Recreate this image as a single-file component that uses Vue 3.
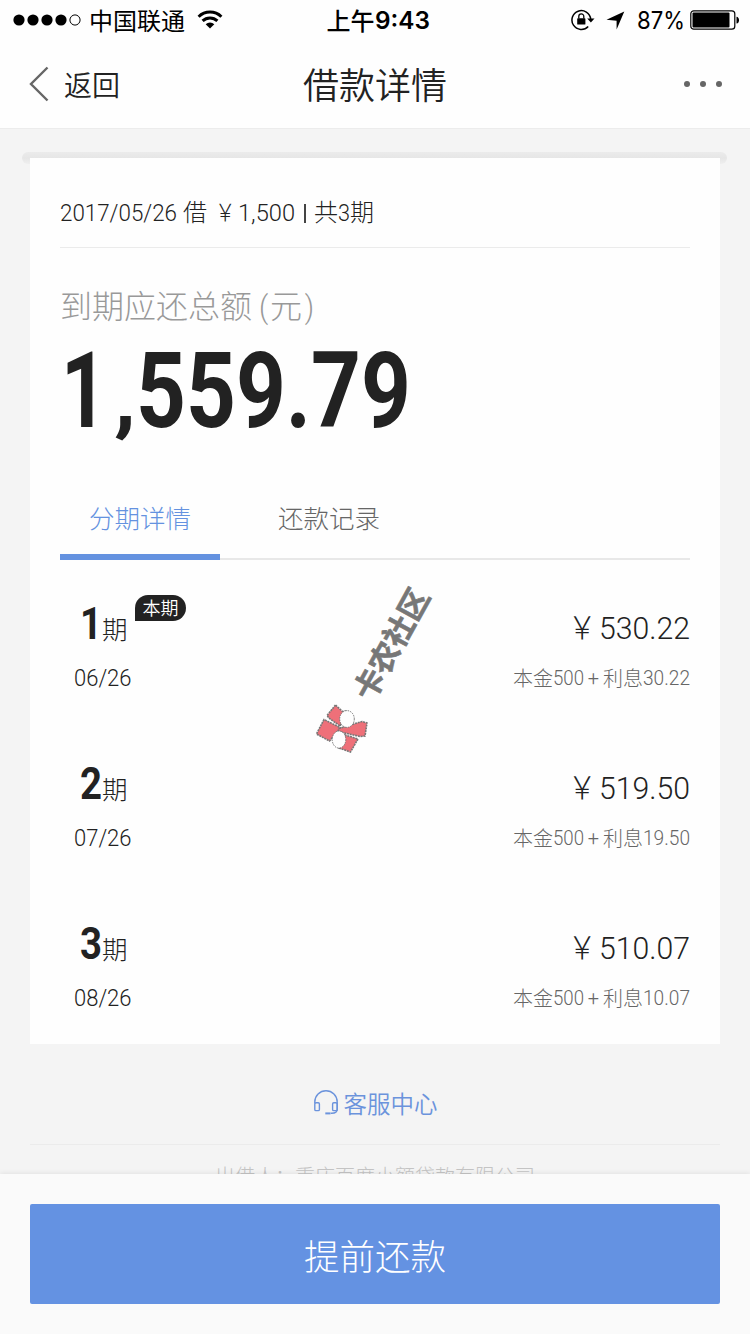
<script setup>
const installments = [
  { no: 1, date: '06/26', amount: '530.22', interest: '30.22', current: true },
  { no: 2, date: '07/26', amount: '519.50', interest: '19.50', current: false },
  { no: 3, date: '08/26', amount: '510.07', interest: '10.07', current: false },
]

// Condenses a run of text horizontally so that it takes the given width
const vFit = {
  mounted(el, { value }) {
    const natural = el.getBoundingClientRect().width
    el.style.transform = `scaleX(${value / natural})`
    el.style.marginRight = `${value - natural}px`
  },
}
</script>

<template>
  <div class="page">
    <header class="top">
      <div class="status">
        <div class="status-left">
          <svg class="signal" width="68" height="12" viewBox="0 0 68 12">
            <circle cx="6" cy="6" r="5.6" /><circle cx="20" cy="6" r="5.6" />
            <circle cx="34" cy="6" r="5.6" /><circle cx="48" cy="6" r="5.6" />
            <circle cx="62" cy="6" r="5.1" fill="none" stroke="#000" stroke-width="1" />
          </svg>
          <span class="carrier">中国联通</span>
          <svg class="wifi" width="26" height="20" viewBox="0 0 26 20">
            <path d="M1.6 6.7a16.3 16.3 0 0 1 22.8 0M5.6 10.9a10.6 10.6 0 0 1 14.8 0" fill="none" stroke="#000" stroke-width="3" />
            <path d="M13 18.6l-4.3-4.3a6.1 6.1 0 0 1 8.6 0z" />
          </svg>
        </div>
        <div class="clock"><span class="ampm">上午</span><span v-fit="55" class="fit inter">9:43</span></div>
        <div class="status-right">
          <svg width="24" height="22" viewBox="0 0 24 22">
            <path d="M17.2 17.5A9.4 9.4 0 1 1 19.7 10" fill="none" stroke="#000" stroke-width="1.5" />
            <path d="M16.2 9.5h7.3l-3.6 4z" />
            <rect x="6.2" y="9.3" width="8.2" height="6.2" rx=".6" />
            <path d="M7.8 9.5V7.4a2.5 2.5 0 0 1 5 0v2.1" fill="none" stroke="#000" stroke-width="1.3" />
          </svg>
          <svg class="arrow" width="19" height="19" viewBox="0 0 19 19"><path d="M18.3.5L10.6 18.5V9.7L.5 8.7z" /></svg>
          <span v-fit="48" class="fit pct">87%</span>
          <svg class="battery" width="50" height="20" viewBox="0 0 50 20">
            <rect x=".8" y=".8" width="44" height="18.4" rx="3" fill="none" stroke="#000" stroke-width="1.2" />
            <rect x="2.5" y="2.6" width="37" height="14.8" rx="1" />
            <path d="M46.5 6.7c3.4.3 3.4 6.5 0 6.8z" />
          </svg>
        </div>
      </div>
      <nav class="nav">
        <div class="back">
          <svg width="22" height="36" viewBox="0 0 22 36"><path d="M19.5 1.5L3 18l16.5 16.5" fill="none" stroke="#666" stroke-width="2.4" /></svg>
          <span>返回</span>
        </div>
        <h1>借款详情</h1>
        <div class="more"><i></i><i></i><i></i></div>
      </nav>
    </header>

    <main>
      <div class="slot"></div>
      <section class="card">
        <div class="summary">
          <span v-fit="117" class="fit">2017/05/26</span>
          <span class="gap-l">借</span>
          <span v-fit="23" class="fit yen">￥</span>
          <span v-fit="57" class="fit">1,500</span>
          <span class="bar"></span>
          <span>共</span><span v-fit="12" class="fit">3</span><span>期</span>
        </div>
        <div class="label">到期应还总额<span v-fit="11" class="fit open">(</span>元<span v-fit="12" class="fit close">)</span></div>
        <div class="total"><span v-fit="46" class="fit">1</span><span v-fit="22" class="fit comma">,</span><span v-fit="275" class="fit">559.79</span></div>

        <div class="tabs">
          <div class="tab active">分期详情</div>
          <div class="tab">还款记录</div>
        </div>

        <ul class="list">
          <li v-for="item in installments" :key="item.no">
            <div class="line main-line">
              <div class="period">
                <span v-fit="22" class="fit no">{{ item.no }}</span><span class="unit">期</span>
                <span v-if="item.current" class="badge">本期</span>
              </div>
              <div class="amount"><span v-fit="31" class="fit amount-yen">￥</span><span v-fit="91" class="fit">{{ item.amount }}</span></div>
            </div>
            <div class="line sub-line">
              <div class="date"><span v-fit="57.5" class="fit">{{ item.date }}</span></div>
              <div class="detail">
                <span class="word">本金</span><span v-fit="31" class="fit">500</span>
                <span class="plus">+</span>
                <span class="word">利息</span><span v-fit="47" class="fit">{{ item.interest }}</span>
              </div>
            </div>
          </li>
        </ul>
      </section>

      <div class="service">
        <svg width="26" height="26" viewBox="0 0 26 26" fill="none" stroke="#6b93dc" stroke-width="1.4">
          <path d="M1.8 13.5V12a11.2 11.2 0 0 1 22.4 0v7.2c0 2.8-2.6 4-5.5 4h-1" />
          <rect x="1.8" y="12.8" width="4.6" height="7.8" rx="1.2" />
          <rect x="19.6" y="12.8" width="4.6" height="7.8" rx="1.2" />
          <path d="M12.3 23.4h5.2" stroke-width="2" />
        </svg>
        <span>客服中心</span>
      </div>
      <div class="lender">出借人：重庆百度小额贷款有限公司</div>
    </main>

    <footer><button>提前还款</button></footer>

    <div class="mark">
      <svg class="mark-logo" width="54" height="52" viewBox="0 0 54 52">
        <g fill="#ee7079" stroke="#777" stroke-width="1.6" stroke-dasharray="2 .8">
          <path d="M20.5 2L12 12.5l2.500 3L25 23l7-15-4.500.5z" />
          <path d="M9 16.5L1.5 31l13 7L26 25z" />
          <path d="M24 25.5l23-7 5 1.500-2 13-5 .5-22-5z" />
          <path d="M27 31l16 5-7.500 13-11.500-4z" />
        </g>
        <ellipse cx="32" cy="16" rx="7.3" ry="8.4" fill="#fefefe" stroke="#777" stroke-dasharray="1.5 1" />
        <ellipse cx="24" cy="36.5" rx="6.8" ry="8.6" fill="#fefefe" stroke="#777" stroke-dasharray="1.5 1" />
      </svg>
      <span class="mark-text">卡农社区</span>
    </div>
  </div>
</template>

<style>
body { margin: 0; background: #f4f4f4; }
</style>

<style scoped>
.page {
  position: relative;
  width: 750px;
  height: 1334px;
  overflow: hidden;
  display: flex;
  flex-direction: column;
  background: #f4f4f4;
  color: #222;
  font-family: Roboto, "Noto Sans CJK SC", sans-serif;
  font-weight: 300;
  white-space: nowrap;
}
svg { display: block; flex: none; }
.fit { display: inline-block; transform-origin: 0 50%; }

.top { height: 128px; background: #fefefe; border-bottom: 1px solid #ececec; flex: none; }
.status {
  height: 40px;
  display: grid;
  grid-template-columns: 1fr auto 1fr;
  grid-template-rows: 40px;
  align-items: center;
  color: #000;
  line-height: 36px;
}
.status-left { display: flex; align-items: center; padding-left: 13px; }
.carrier { font-size: 24px; font-weight: 400; margin-left: 8px; padding-top: 3px; }
.wifi { margin-left: 12px; }
.clock { display: flex; font-size: 24px; font-weight: 500; padding-left: 6px; }
.ampm { padding-top: 3px; }
.inter { font-family: Inter, sans-serif; font-weight: 600; padding-top: 2px; }
.status-right { display: flex; align-items: center; justify-content: flex-end; padding-right: 10px; }
.arrow { margin: 0 12px 0 11px; }
.pct { font-family: Inter, sans-serif; font-size: 24px; font-weight: 400; padding-top: 2px; }
.battery { margin-left: 5px; }
.nav {
  height: 88px;
  display: grid;
  grid-template-columns: 1fr auto 1fr;
  align-items: center;
}
.back { display: flex; align-items: center; padding-left: 28px; font-size: 28px; line-height: 40px; gap: 14px; font-weight: 350; }
.back span { padding-top: 5px; }
h1 { margin: 0; padding-top: 6px; font-size: 36px; line-height: 50px; font-weight: 350; }
.more { display: flex; justify-content: flex-end; gap: 10px; padding-right: 28px; }
.more i { width: 6px; height: 6px; border-radius: 50%; background: #666; }

main { flex: 1; min-height: 0; overflow: hidden; padding-top: 23px; }
.slot { height: 12px; margin: 0 23px -6px 22px; border-radius: 6px; background: linear-gradient(#ebebeb, #e6e6e6 50%, #efefef); }
.card { position: relative; box-sizing: border-box; height: 886px; margin: 0 30px; padding: 0 30px; background: #fefefe; }
.summary {
  display: flex;
  align-items: center;
  box-sizing: border-box;
  height: 90px;
  padding-top: 21px;
  border-bottom: 1px solid #ebebeb;
  font-size: 24px;
  line-height: 36px;
}
.gap-l { margin-left: 6px; }
.yen { margin-left: 8px; padding-right: 3px; }
.bar { width: 2px; height: 19px; margin: 0 8px 0 9px; background: #444; }
.label { margin-top: 36px; height: 46px; line-height: 46px; font-size: 32px; color: #999; }
.open { margin-left: 7px; padding-right: 2px; }
.close { padding-left: 3px; }
.total { display: flex; height: 124px; line-height: 124px; font-size: 105px; font-weight: 700; padding-left: 1px; }
.comma { font-size: 84px; margin-left: 7px; padding-top: 6px; height: 118px; }
.tabs { display: flex; height: 78px; margin-top: 28px; box-sizing: border-box; border-bottom: 2px solid #e8e8e8; }
.tab { width: 160px; height: 72px; line-height: 74px; text-align: center; font-size: 25.5px; color: #666; margin-right: 29px; }
.tab.active { color: #6492e0; border-bottom: 6px solid #6492e0; }
.list { list-style: none; margin: 0; padding: 4px 0 0; }
li { height: 160px; box-sizing: border-box; padding-top: 40px; }
.line { display: flex; justify-content: space-between; align-items: center; }
.main-line { height: 48px; line-height: 48px; }
.period { position: relative; display: flex; align-items: center; padding-left: 20px; }
.no { font-size: 44px; font-weight: 700; height: 56px; }
.unit { font-size: 25.5px; padding-top: 4px; }
.badge {
  position: absolute;
  left: 75px;
  top: -5px;
  width: 51px;
  height: 26px;
  border-radius: 13px 13px 13px 0;
  background: #222;
  color: #fff;
  font-size: 18px;
  font-weight: 350;
  line-height: 28px;
  text-align: center;
}
.amount { display: flex; font-size: 32px; }
.amount-yen { padding-right: 3px; }
.sub-line { height: 30px; line-height: 30px; margin-top: 11px; }
.date { padding-left: 14px; font-size: 24px; }
.detail { display: flex; font-size: 20px; color: #666; }
.word { padding-top: 1px; }
.plus { width: 19px; text-align: center; }

.service {
  display: flex;
  justify-content: center;
  align-items: center;
  gap: 5px;
  height: 101px;
  box-sizing: border-box;
  margin: 0 30px;
  padding: 18px 0 0;
  border-bottom: 1px solid #ebebeb;
  font-size: 23.5px;
  font-weight: 350;
  color: #6b93dc;
}
.lender { text-align: center; font-size: 20px; line-height: 30px; padding-top: 17px; color: #c4c4c4; }

footer { position: relative; flex: none; box-sizing: border-box; height: 160px; padding: 30px; background: #fafafa; box-shadow: 0 -1px 5px rgba(0, 0, 0, .08); }
button {
  display: block;
  width: 690px;
  height: 100px;
  padding: 0;
  border: 0;
  border-radius: 2px;
  background: #6492e2;
  color: #fff;
  font: inherit;
  font-size: 35.5px;
}

.mark { position: absolute; left: 315px; top: 582px; width: 122px; height: 172px; }
.mark-logo { position: absolute; left: 0; top: 121px; }
.mark-text {
  position: absolute;
  left: 16px;
  top: 42px;
  width: 124px;
  line-height: 40px;
  font-size: 30.5px;
  font-weight: 700;
  color: #777;
  -webkit-text-stroke: .6px #777;
  transform: rotate(-61deg);
}
</style>
